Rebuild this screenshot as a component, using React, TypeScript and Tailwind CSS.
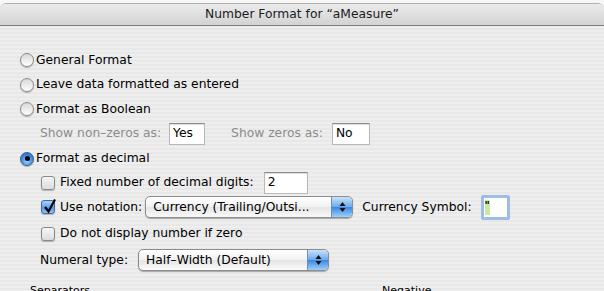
import React from "react";

const font = { fontFamily: '"DejaVu Sans", Verdana, sans-serif' };

function Radio({ on = false }: { on?: boolean }) {
  return on ? (
    <span className="relative flex h-[14px] w-[14px] items-center justify-center rounded-full border border-[#2f5f9f] bg-[radial-gradient(circle_at_50%_70%,#9cd0ff_0%,#4f95e6_45%,#1d5cba_100%)] shadow-[0_1px_1px_rgba(0,0,0,0.3)]">
      <span className="h-[5px] w-[5px] rounded-full bg-black" />
    </span>
  ) : (
    <span className="h-[14px] w-[14px] rounded-full border border-[#8a8a8a] bg-[linear-gradient(to_bottom,#d8d8d8,#ffffff)] shadow-[0_1px_1px_rgba(0,0,0,0.25)]" />
  );
}

function Check({ on = false }: { on?: boolean }) {
  return (
    <span
      className={
        "relative h-[14px] w-[14px] rounded-[3px] border shadow-[0_1px_1px_rgba(0,0,0,0.25)] " +
        (on
          ? "border-[#3b6aa8] bg-[linear-gradient(to_bottom,#a9d3fb,#5a9ae6_60%,#8fc2f6)]"
          : "border-[#8a8a8a] bg-[linear-gradient(to_bottom,#f6f6f6,#dcdcdc)]")
      }
    >
      {on && (
        <svg className="absolute left-[1px] top-[-3px]" width="14" height="16" viewBox="0 0 14 16">
          <path d="M2 9 L5.5 13.5 L12 1.5" fill="none" stroke="#000" strokeWidth="2.2" strokeLinejoin="miter" />
        </svg>
      )}
    </span>
  );
}

function Field({ text, w }: { text: string; w: string }) {
  return (
    <span
      className={
        "flex h-[22px] items-center border border-[#b8b8b8] border-t-[#8c8c8c] bg-white pl-[3px] text-black shadow-[inset_0_1px_1px_rgba(0,0,0,0.15)] " +
        w
      }
    >
      {text}
    </span>
  );
}

function Popup({ text, w }: { text: string; w: string }) {
  return (
    <span
      className={
        "flex h-[22px] items-stretch overflow-hidden rounded-[5px] border border-[#8d8d8d] bg-[linear-gradient(to_bottom,#ffffff,#f1f1f1_50%,#e4e4e4_51%,#fafafa)] shadow-[0_1px_1px_rgba(0,0,0,0.3)] " +
        w
      }
    >
      <span className="flex flex-1 items-center pl-[7px] text-black">{text}</span>
      <span className="flex w-[21px] flex-col items-center justify-center gap-[2px] rounded-r-[4px] border-l border-[#6b8fbf] bg-[linear-gradient(to_bottom,#c8e2fb,#6aa9ec_50%,#3d86e0_51%,#9dd0fb)]">
        <svg width="7" height="4" viewBox="0 0 7 4">
          <path d="M0.5 4 L3.5 0 L6.5 4 Z" fill="#111" />
        </svg>
        <svg width="7" height="4" viewBox="0 0 7 4">
          <path d="M0.5 0 L3.5 4 L6.5 0 Z" fill="#111" />
        </svg>
      </span>
    </span>
  );
}

export default function App() {
  return (
    <div
      className="h-[291px] w-[604px] overflow-hidden bg-[#f7f7f7] pt-[3px] text-[12px] text-black"
      style={font}
    >
      <div className="flex h-[288px] flex-col overflow-hidden rounded-t-[6px] border-t border-[#b0b0b0]">
        <div className="flex h-[22px] shrink-0 items-center justify-center border-b border-[#7d7d7d] bg-[linear-gradient(to_bottom,#ebebeb,#d3d3d3)] text-[12.3px] text-[#1c1c1c]">
          Number Format for “aMeasure”
        </div>
        <div className="flex flex-1 flex-col bg-[repeating-linear-gradient(to_bottom,#eeeeee_0px,#eeeeee_2px,#e8e8e8_2px,#e8e8e8_4px)] pt-[22px] text-[12.3px]">
          <div className="flex h-[24px] items-center gap-[2px] pl-[20px]">
            <Radio />
            <span>General Format</span>
          </div>
          <div className="flex h-[25px] items-center gap-[2px] pl-[20px]">
            <Radio />
            <span>Leave data formatted as entered</span>
          </div>
          <div className="flex h-[24px] items-center gap-[2px] pl-[20px]">
            <Radio />
            <span>Format as Boolean</span>
          </div>
          <div className="flex h-[25px] items-center pl-[40px]">
            <span className="text-[#8c8c8c]">Show non–zeros as:</span>
            <span className="ml-[8px]">
              <Field text="Yes" w="w-[36px]" />
            </span>
            <span className="ml-[26px] text-[#8c8c8c]">Show zeros as:</span>
            <span className="ml-[9px]">
              <Field text="No" w="w-[38px]" />
            </span>
          </div>
          <div className="flex h-[25px] items-center gap-[2px] pl-[20px]">
            <Radio on />
            <span>Format as decimal</span>
          </div>
          <div className="flex h-[23px] items-center pl-[41px]">
            <Check />
            <span className="ml-[5px]">Fixed number of decimal digits:</span>
            <span className="ml-[10px]">
              <Field text="2" w="w-[44px]" />
            </span>
          </div>
          <div className="flex h-[26px] items-center pl-[41px]">
            <Check on />
            <span className="ml-[5px]">Use notation:</span>
            <span className="ml-[3px]">
              <Popup text="Currency (Trailing/Outsi..." w="w-[208px]" />
            </span>
            <span className="ml-[9px]">Currency Symbol:</span>
            <span className="ml-[9px] flex h-[25px] w-[29px] items-center rounded-[2px] border-[3px] border-[#9dbde6] bg-white pl-[1px]">
              <span className="h-[15px] w-[5px] bg-[#cbeaa0] text-[10px] leading-[12px] font-bold">"</span>
            </span>
          </div>
          <div className="flex h-[27px] items-center pl-[41px]">
            <Check />
            <span className="ml-[5px]">Do not display number if zero</span>
          </div>
          <div className="flex h-[26px] items-center pl-[40px]">
            <span>Numeral type:</span>
            <span className="ml-[10px]">
              <Popup text="Half–Width (Default)" w="w-[191px]" />
            </span>
          </div>
          <div className="mt-[10px] flex items-center text-[11px]">
            <span className="ml-[30px]">Separators</span>
            <span className="ml-[292px]">Negative</span>
          </div>
        </div>
      </div>
    </div>
  );
}
